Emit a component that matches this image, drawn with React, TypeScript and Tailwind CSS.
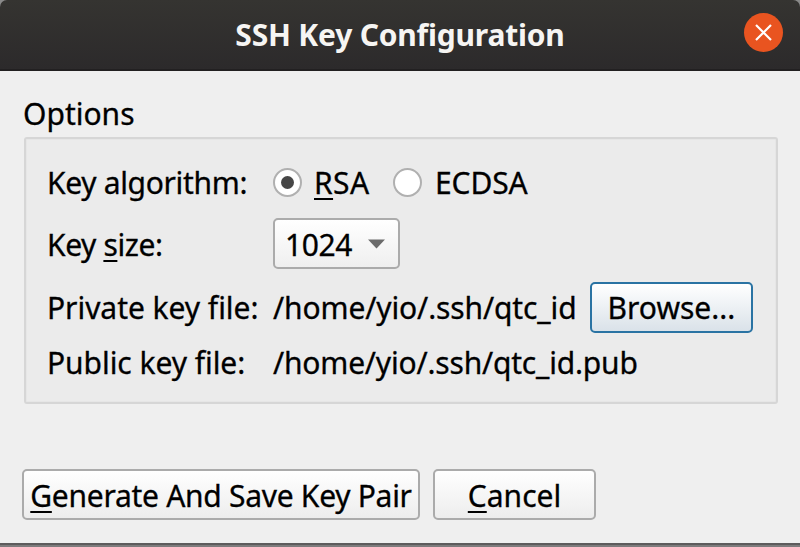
import type { ReactNode } from 'react';

function Mnemonic({ children }: { children: ReactNode }) {
  return (
    <span className="underline decoration-2 underline-offset-[4px] [text-decoration-skip-ink:none]">{children}</span>
  );
}

function Radio({ checked = false }: { checked?: boolean }) {
  return (
    <span className="flex size-[29px] shrink-0 items-center justify-center rounded-full border-2 border-[#b0b0b0] bg-white">
      {checked && <span className="size-[13px] rounded-full bg-[#464646]" />}
    </span>
  );
}

export default function App() {
  return (
    <div className="flex h-[547px] w-[800px] flex-col overflow-hidden whitespace-nowrap bg-[#8a8a8a] font-['Noto_Sans',sans-serif] text-[30px] leading-[40px] text-black [-webkit-text-stroke:0.3px]">
      <header className="relative flex h-[71px] shrink-0 items-center justify-center rounded-t-[7px] border-b-2 border-[#222021] bg-linear-to-b from-[#353431] to-[#2c2a2b] pt-[1px]">
        <h1 className="font-bold tracking-[-0.2px] text-[#f6f5f3] [-webkit-text-stroke:0px]">SSH Key Configuration</h1>
        <button aria-label="Close" className="absolute top-[13px] left-[744px] flex size-[39px] items-center justify-center rounded-full bg-[#e95420]">
          <svg width="17" height="17" viewBox="0 0 17 17" fill="none" stroke="#fff" strokeWidth="2.2">
            <path d="M1 1 L16 16 M16 1 L1 16" />
          </svg>
        </button>
      </header>

      <main className="flex h-[472px] shrink-0 flex-col bg-[#efefef] pt-[23px] pl-[22px]">
        <h2 className="h-[43px] pl-[1px]">Options</h2>

        <section className="ml-[2px] flex h-[267px] w-[754px] flex-col rounded-[3px] border-2 border-[#d6d6d6] bg-[#ebebeb] pt-[23px] pl-[21px] shadow-[inset_0_0_0_1px_#e6e6e6]">
          <div className="mb-[16px] flex h-[40px] items-center">
            <span className="w-[226px] pt-[2px] tracking-[-0.33px]">Key algorithm:</span>
            <label className="flex items-center">
              <Radio checked />
              <span className="ml-[12px] w-[79px] pt-[2px] tracking-[0.4px]"><Mnemonic>R</Mnemonic>SA</span>
            </label>
            <label className="flex items-center">
              <Radio />
              <span className="ml-[13px] pt-[2px] tracking-[-0.1px]">ECDSA</span>
            </label>
          </div>
          <div className="mb-[13px] flex h-[51px] items-center">
            <span className="w-[226px] pt-[2px] tracking-[-0.4px]">Key <Mnemonic>s</Mnemonic>ize:</span>
            <div className="flex h-[51px] w-[127px] items-center rounded-[5px] border-2 border-[#ababab] bg-linear-to-b from-white to-[#efefef] pl-[10px]">
              <span className="pt-[2px] tracking-[-0.4px]">1024</span>
              <svg className="ml-[16px]" width="17" height="10" viewBox="0 0 17 10">
                <path d="M0 0.5 H17 L8.5 9.5 Z" fill="#6b6b6b" />
              </svg>
            </div>
          </div>
          <div className="mb-[9px] flex h-[51px] items-center">
            <span className="w-[226px] tracking-[-0.04px]">Private key file:</span>
            <span className="w-[317px] tracking-[-0.12px]">/home/yio/.ssh/qtc_id</span>
            <button className="flex h-[51px] w-[163px] items-center justify-center rounded-[5px] border-2 border-[#2a73a3] bg-linear-to-b from-white to-[#dae2e9]">Browse...</button>
          </div>
          <div className="flex h-[40px] items-center">
            <span className="w-[226px] pt-[2px] tracking-[-0.05px]">Public key file:</span>
            <span className="pt-[2px] tracking-[-0.19px]">/home/yio/.ssh/qtc_id.pub</span>
          </div>
        </section>

        <div className="mt-[65px] flex gap-[13px]">
          <button className="flex h-[51px] w-[398px] items-center justify-center rounded-[5px] border-2 border-[#ababab] bg-linear-to-b from-white to-[#ededed] pt-[2px] tracking-[-0.28px]">
            <span><Mnemonic>G</Mnemonic>enerate And Save Key Pair</span>
          </button>
          <button className="flex h-[51px] w-[163px] items-center justify-center rounded-[5px] border-2 border-[#ababab] bg-linear-to-b from-white to-[#ededed] pt-[2px]">
            <span><Mnemonic>C</Mnemonic>ancel</span>
          </button>
        </div>
      </main>
      <div className="h-[2px] shrink-0 bg-[#5d5b5c]" />
      <div className="h-[2px] shrink-0 bg-[#7d7b7c]" />
    </div>
  );
}
